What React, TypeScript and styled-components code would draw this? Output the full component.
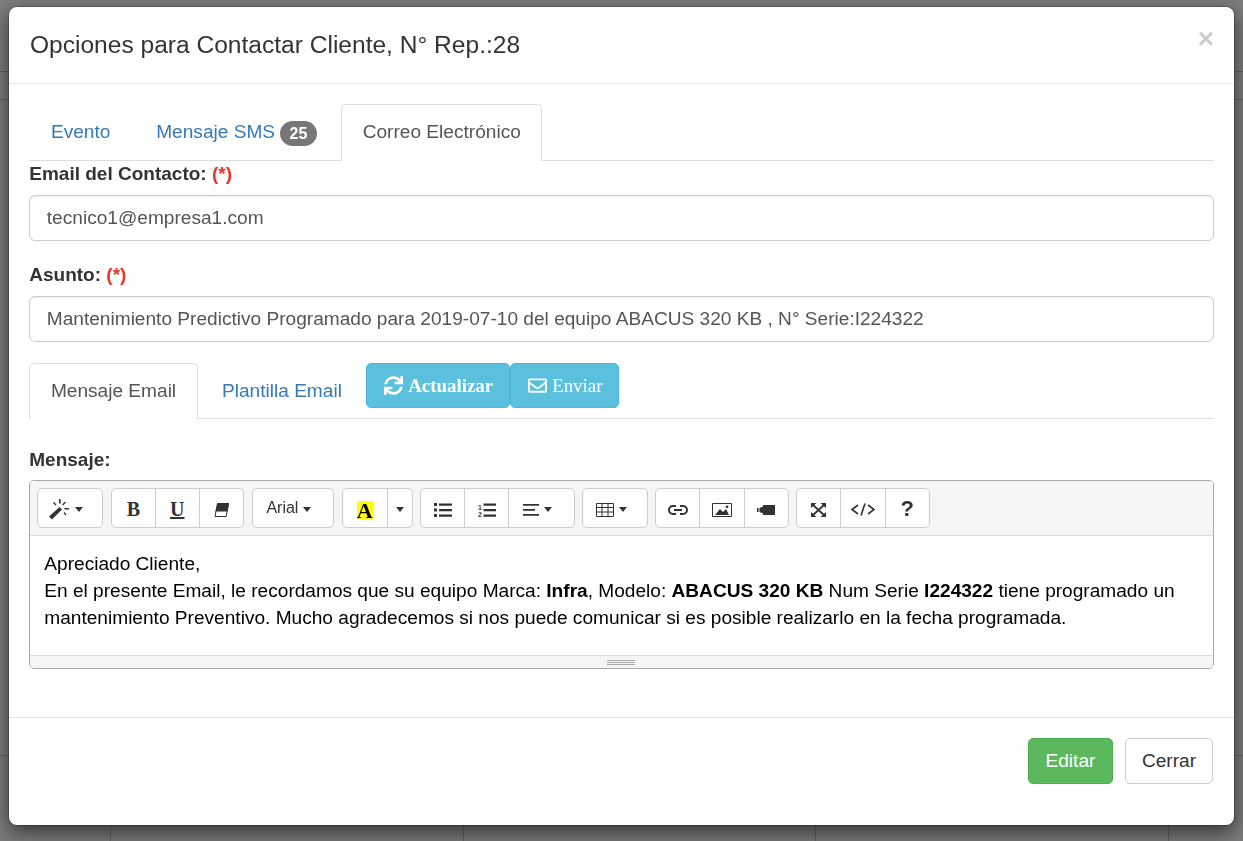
import React from 'react';
import styled, { createGlobalStyle } from 'styled-components';
import { FaSync, FaRegEnvelope } from 'react-icons/fa';

const GlobalStyle = createGlobalStyle`
  html, body {
    margin: 0;
    height: 100%;
    overflow: hidden;
    font-family: "Liberation Sans", Arial, sans-serif;
    font-size: 19.1px;
    line-height: 26.67px;
    color: #333;
  }
  * { box-sizing: border-box; }
`;

/* dimmed page behind the dialog, only the table lines show through */
const Backdrop = styled.div`
  position: fixed;
  inset: 0;
  background-color: #7c7c7c;
  background-image:
    linear-gradient(#626262, #626262), linear-gradient(#626262, #626262), linear-gradient(#626262, #626262),
    linear-gradient(#626262, #626262), linear-gradient(#626262, #626262), linear-gradient(#626262, #626262),
    linear-gradient(#626262, #626262);
  background-size: 100% 1px, 100% 1px, 100% 1px, 1px 100%, 1px 100%, 1px 100%, 1px 100%;
  background-position: 0 71px, 0 99px, 0 755px, 110px 755px, 463px 755px, 815px 755px, 1168px 755px;
  background-repeat: no-repeat;
`;

const Dialog = styled.div`
  position: relative;
  width: 1225px;
  height: 818px;
  margin: 7px auto 0;
  display: flex;
  flex-direction: column;
  background: #fff;
  border-radius: 8px;
  box-shadow: 0 0 0 1px rgba(0, 0, 0, .2), 0 7px 20px rgba(0, 0, 0, .6);
`;

const Header = styled.div`
  height: 77px;
  padding: 0 20px 0 21px;
  display: flex;
  align-items: center;
  justify-content: space-between;
  border-bottom: 1px solid #e5e5e5;
`;

const Title = styled.h4`
  margin: -1px 0 0;
  font-size: 24.55px;
  font-weight: 400;
  line-height: 32px;
  color: #333;
`;

const Close = styled.span`
  margin: -12px 0 0;
  font-size: 28px;
  font-weight: 700;
  line-height: 1;
  color: #cdcdcd;
`;

const Body = styled.div`
  flex: 1;
  padding: 20px 20.5px 0 20.3px;
`;

const Tabs = styled.div<{ $h: number }>`
  display: flex;
  align-items: flex-start;
  height: ${p => p.$h}px;
  border-bottom: 1px solid #ddd;
`;

const Tab = styled.a<{ $active?: boolean }>`
  height: ${p => p.$active ? 'calc(100% + 1px)' : '100%'};
  margin-right: 2.67px;
  padding: 14px 20.6px 0;
  border: 1px solid ${p => p.$active ? '#ddd' : 'transparent'};
  border-bottom-color: ${p => p.$active ? '#fff' : 'transparent'};
  border-radius: 5px 5px 0 0;
  color: ${p => p.$active ? '#555' : '#337ab7'};
  background: #fff;
  white-space: nowrap;
`;

const Badge = styled.span`
  display: inline-block;
  margin-left: 5px;
  padding: 0 9.5px;
  height: 25px;
  font-size: 16px;
  font-weight: 700;
  line-height: 25px;
  color: #fff;
  background: #777;
  border-radius: 13px;
  vertical-align: -1px;
`;

const Label = styled.label`
  display: block;
  margin-bottom: 7px;
  font-size: 19px;
  font-weight: 700;
  color: #333;
`;

const Required = styled.span`
  color: #e8352c;
`;

const Group = styled.div`
  margin-bottom: 21.5px;
`;

const MessageGroup = styled.div`
  margin-top: 28px;
`;

const Input = styled.input`
  display: block;
  width: 100%;
  height: 46px;
  padding: 1px 16.5px 0;
  font: inherit;
  color: #555;
  background: #fff;
  border: 1px solid #ccc;
  border-radius: 6px;
  box-shadow: inset 0 1px 1px rgba(0, 0, 0, .075);
`;

const InfoButton = styled.button<{ $bold?: boolean }>`
  height: 45px;
  padding: 0 16px 0 17px;
  display: inline-flex;
  align-items: center;
  gap: 5px;
  font-family: "Liberation Serif", "Times New Roman", serif;
  font-size: 18.9px;
  font-weight: ${p => p.$bold ? 700 : 400};
  color: #fff;
  background: #5bc0de;
  border: 1px solid #46b8da;
  border-radius: 5px;
`;

const Editor = styled.div`
  height: 189px;
  margin-top: -1px;
  display: flex;
  flex-direction: column;
  border: 1px solid #a9a9a9;
  border-radius: 5px;
  overflow: hidden;
`;

const Toolbar = styled.div`
  height: 55px;
  padding: 7.3px 7px 0;
  display: flex;
  gap: 7.5px;
  background: #f5f5f5;
  border-bottom: 1px solid #ddd;
`;

const BtnGroup = styled.div`
  display: flex;
  height: 40px;
  background: #fff;
  border: 1px solid #ccc;
  border-radius: 5px;
`;

const ToolButton = styled.div<{ $w: number; $caret?: boolean }>`
  width: ${p => p.$w}px;
  padding-right: ${p => p.$caret ? 8 : 0}px;
  display: flex;
  align-items: center;
  justify-content: center;
  gap: 5px;
  color: #333;
  font-size: 16px;
  & + & { border-left: 1px solid #ccc; }
  svg { margin-top: 3px; }
`;

const Caret = styled.i`
  display: inline-block;
  width: 0;
  height: 0;
  border-top: 5px solid #333;
  border-left: 4px solid transparent;
  border-right: 4px solid transparent;
  margin-top: 3px;
`;

const SerifGlyph = styled.span<{ $underline?: boolean }>`
  margin-top: 3px;
  font-family: "Liberation Serif", "Times New Roman", serif;
  font-size: 20px;
  font-weight: 700;
  text-decoration: ${p => p.$underline ? 'underline' : 'none'};
`;

const ColorGlyph = styled(SerifGlyph)`
  width: 16px;
  height: 18px;
  font-size: 22px;
  line-height: 20px;
  text-align: center;
  color: #000;
  background: #ff0;
`;

const Help = styled.span`
  margin-top: 2px;
  font-size: 22px;
  font-weight: 700;
`;

const Editing = styled.div`
  flex: 1;
  padding: 14px 14px 0;
  color: #000;
  line-height: 27px;
  background: #fff;
`;

const Statusbar = styled.div`
  height: 13px;
  display: flex;
  flex-direction: column;
  align-items: center;
  justify-content: center;
  gap: 1px;
  background: #f5f5f5;
  border-top: 1px solid #ddd;
`;

const Grip = styled.i`
  width: 28px;
  height: 1px;
  background: #a9a9a9;
`;

const Footer = styled.div`
  height: 108px;
  padding: 20px 21px 0;
  display: flex;
  justify-content: flex-end;
  gap: 12px;
  border-top: 1px solid #e5e5e5;
`;

const FooterButton = styled.button<{ $primary?: boolean }>`
  height: 46px;
  padding: 0 ${p => p.$primary ? 16.5 : 16}px;
  font: inherit;
  color: ${p => p.$primary ? '#fff' : '#333'};
  background: ${p => p.$primary ? '#5cb85c' : '#fff'};
  border: 1px solid ${p => p.$primary ? '#4cae4c' : '#ccc'};
  border-radius: 5px;
`;

const Wand = () => (
  <svg width="21" height="21" viewBox="0 0 21 21" fill="#333">
    <path d="M0 17.500l10.500-9.500 2.500 2.500-10 10z" />
    <path d="M10 0h1.500l.3 4.500h-1.800zM16 2.500l1 1-3 3-1-1zM15.500 9h4.500v1.500h-4.500zM14.500 14l1-1 2 2.500-1 1zM4 4l1-1 2.500 2.500-1 1z" />
  </svg>
);

const Eraser = () => (
  <svg width="15" height="14" viewBox="0 0 15 14">
    <path d="M3.500.5h11l-2.300 13H1z" fill="#fff" stroke="#333" />
    <path d="M3.500 0H15l-1.500 8.500H1.500z" fill="#333" />
  </svg>
);

const ListUl = () => (
  <svg width="18" height="14" viewBox="0 0 18 14" fill="#333">
    <path d="M0 0h3v3H0zM0 5.500h3v3H0zM0 11h3v3H0zM5 .5h13v2.200H5zM5 6h13v2.200H5zM5 11.500h13v2.200H5z" />
  </svg>
);

const ListOl = () => (
  <svg width="18" height="14" viewBox="0 0 18 14" fill="#333">
    <text x="0" y="6.500" fontSize="7" fontWeight="700" fontFamily="Liberation Sans">1</text>
    <text x="0" y="14" fontSize="7" fontWeight="700" fontFamily="Liberation Sans">2</text>
    <path d="M5.500.5H18v2.200H5.500zM5.500 6H18v2.200H5.500zM5.500 11.500H18v2.200H5.500z" />
  </svg>
);

const AlignLeft = () => (
  <svg width="16" height="12" viewBox="0 0 16 12" fill="#333">
    <path d="M0 0h16v1.800H0zM0 5h12v1.800H0zM0 10h16v1.800H0z" />
  </svg>
);

const TableIcon = () => (
  <svg width="18" height="14" viewBox="0 0 18 14" fill="none" stroke="#333">
    <path d="M.5.5h17v13H.5zM.5 4.500h17M.5 9h17M6 .5v13M12 .5v13" />
  </svg>
);

const LinkIcon = () => (
  <svg width="20" height="10" viewBox="0 0 20 10" fill="none" stroke="#333" strokeWidth="2">
    <path d="M8 1H5a4 4 0 0 0 0 8h3M12 1h3a4 4 0 0 1 0 8h-3M6 5h8" />
  </svg>
);

const Picture = () => (
  <svg width="20" height="14" viewBox="0 0 20 14">
    <path d="M.5.5h19v13H.5z" fill="#fff" stroke="#333" />
    <path d="M3 12l5-6 3 3 3-3 3 6z" fill="#333" />
    <circle cx="15" cy="3.800" r="1.400" fill="#333" />
  </svg>
);

const Video = () => (
  <svg width="18" height="10" viewBox="0 0 18 10" fill="#333">
    <path d="M6 0h12v10H6zM2.500 3L6 1.500v7L2.500 7zM0 3h1.600v4H0z" />
  </svg>
);

const Fullscreen = () => (
  <svg width="15" height="14" viewBox="0 0 15 14">
    <path d="M0 0h5.500L0 5zM15 0v5L9.500 0zM0 14V9l5.500 5zM15 14H9.500L15 9z" fill="#333" />
    <path d="M2 2l11 10M13 2L2 12" stroke="#333" strokeWidth="1.800" fill="none" />
  </svg>
);

const CodeIcon = () => (
  <svg width="24" height="13" viewBox="0 0 24 13" fill="none" stroke="#333" strokeWidth="1.600">
    <path d="M7 2L1 6.500 7 11M17 2l6 4.500-6 4.500M14 .5L10 12.500" />
  </svg>
);

export default function App() {
  return (
    <>
      <GlobalStyle />
      <Backdrop />
      <Dialog>
        <Header>
          <Title>Opciones para Contactar Cliente, N° Rep.:28</Title>
          <Close>×</Close>
        </Header>
        <Body>
          <Tabs $h={57}>
            <Tab>Evento</Tab>
            <Tab>Mensaje SMS<Badge>25</Badge></Tab>
            <Tab $active>Correo Electrónico</Tab>
          </Tabs>
          <Group>
            <Label>Email del Contacto: <Required>(*)</Required></Label>
            <Input defaultValue="tecnico1@empresa1.com" />
          </Group>
          <Group>
            <Label>Asunto: <Required>(*)</Required></Label>
            <Input defaultValue="Mantenimiento Predictivo Programado para 2019-07-10 del equipo ABACUS 320 KB , N° Serie:I224322" />
          </Group>
          <Tabs $h={56}>
            <Tab $active>Mensaje Email</Tab>
            <Tab>Plantilla Email</Tab>
            <InfoButton $bold><FaSync size={19} />Actualizar</InfoButton>
            <InfoButton><FaRegEnvelope size={19} />Enviar</InfoButton>
          </Tabs>
          <MessageGroup>
            <Label>Mensaje:</Label>
            <Editor>
              <Toolbar>
                <BtnGroup>
                  <ToolButton $w={64} $caret><Wand /><Caret /></ToolButton>
                </BtnGroup>
                <BtnGroup>
                  <ToolButton $w={43}><SerifGlyph>B</SerifGlyph></ToolButton>
                  <ToolButton $w={44}><SerifGlyph $underline>U</SerifGlyph></ToolButton>
                  <ToolButton $w={44.4}><Eraser /></ToolButton>
                </BtnGroup>
                <BtnGroup>
                  <ToolButton $w={80.4} $caret>Arial<Caret /></ToolButton>
                </BtnGroup>
                <BtnGroup>
                  <ToolButton $w={44.4}><ColorGlyph>A</ColorGlyph></ToolButton>
                  <ToolButton $w={25}><Caret /></ToolButton>
                </BtnGroup>
                <BtnGroup>
                  <ToolButton $w={43}><ListUl /></ToolButton>
                  <ToolButton $w={44}><ListOl /></ToolButton>
                  <ToolButton $w={65.4} $caret><AlignLeft /><Caret /></ToolButton>
                </BtnGroup>
                <BtnGroup>
                  <ToolButton $w={63.4} $caret><TableIcon /><Caret /></ToolButton>
                </BtnGroup>
                <BtnGroup>
                  <ToolButton $w={43}><LinkIcon /></ToolButton>
                  <ToolButton $w={45}><Picture /></ToolButton>
                  <ToolButton $w={43.4}><Video /></ToolButton>
                </BtnGroup>
                <BtnGroup>
                  <ToolButton $w={43}><Fullscreen /></ToolButton>
                  <ToolButton $w={45}><CodeIcon /></ToolButton>
                  <ToolButton $w={43.4}><Help>?</Help></ToolButton>
                </BtnGroup>
              </Toolbar>
              <Editing>
                Apreciado Cliente,<br />
                En el presente Email, le recordamos que su equipo Marca: <b>Infra</b>, Modelo: <b>ABACUS 320 KB</b> Num Serie <b>I224322</b> tiene programado un<br />
                mantenimiento Preventivo. Mucho agradecemos si nos puede comunicar si es posible realizarlo en la fecha programada.
              </Editing>
              <Statusbar><Grip /><Grip /><Grip /></Statusbar>
            </Editor>
          </MessageGroup>
        </Body>
        <Footer>
          <FooterButton $primary>Editar</FooterButton>
          <FooterButton>Cerrar</FooterButton>
        </Footer>
      </Dialog>
    </>
  );
}
